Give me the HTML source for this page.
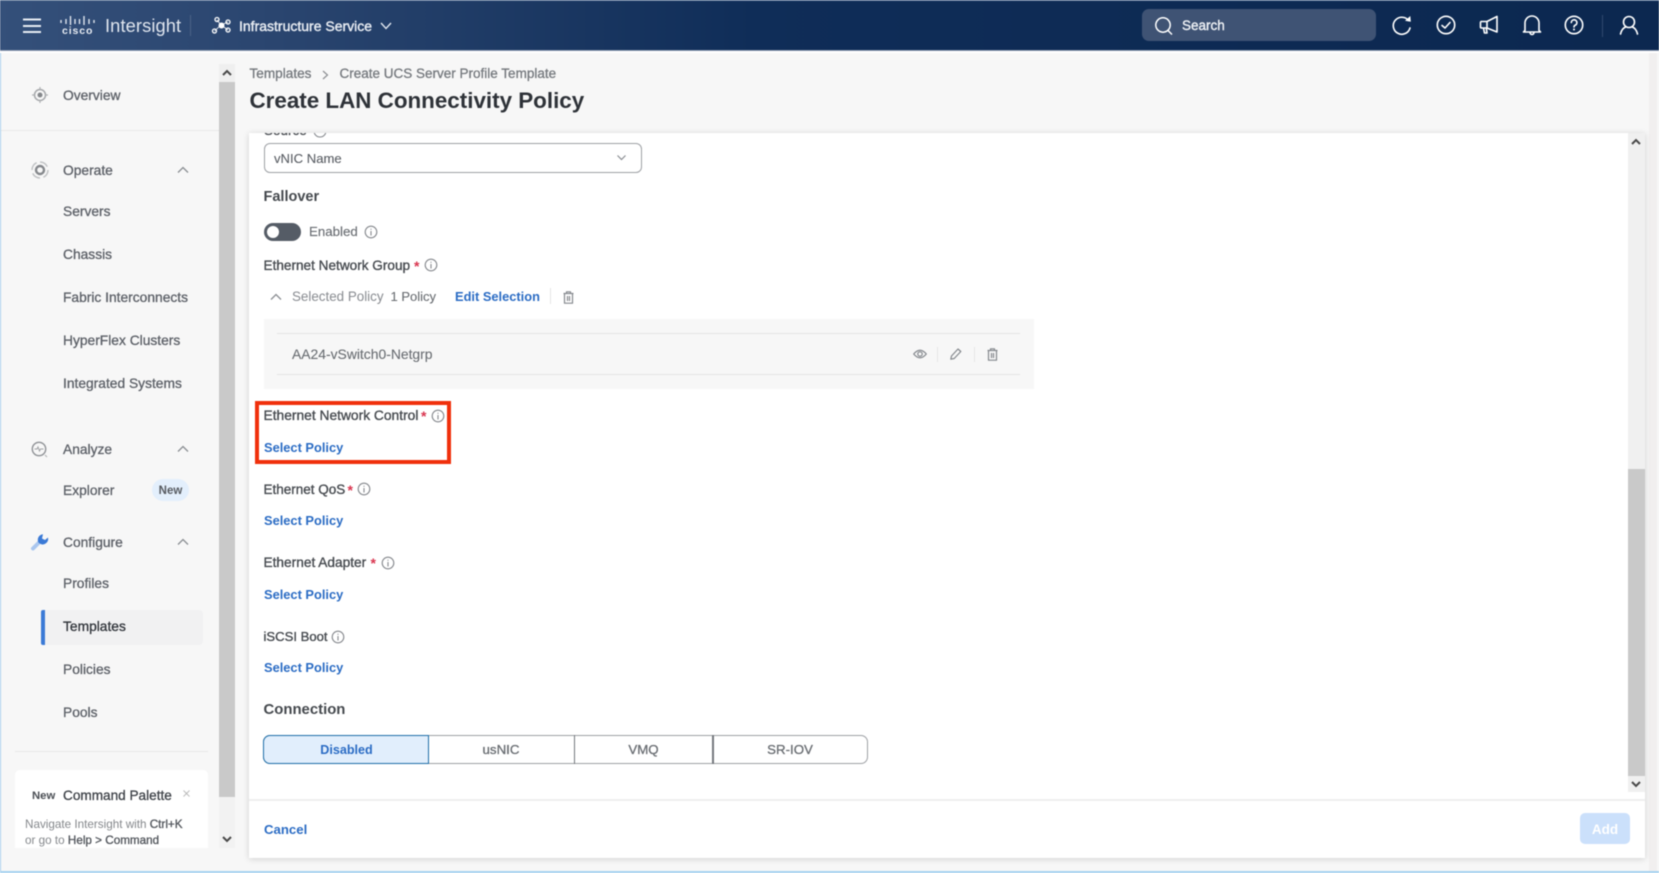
<!DOCTYPE html>
<html lang="en"><head><meta charset="utf-8"><title>Create LAN Connectivity Policy</title>
<style>
html,body{margin:0;padding:0;width:1659px;height:873px;overflow:hidden;background:#f7f7f7}
#r{position:absolute;left:0;top:0;width:1659px;height:873px;overflow:hidden;background:#f7f7f7;font-family:"Liberation Sans",sans-serif;filter:blur(.45px)}
.a{position:absolute}
.t{position:absolute;white-space:nowrap;line-height:20px;transform:translateY(-50%);margin-top:1px;font-size:13.8px;color:#5d6168;-webkit-text-stroke:.3px currentColor}
.c{transform:translate(-50%,-50%);margin-top:0}
.h{margin-top:0}
.l{color:#474b50;font-size:13.6px;-webkit-text-stroke:.35px currentColor}
.sp{color:#2b6cc4;font-size:12.85px;font-weight:bold;-webkit-text-stroke:0}
.st{color:#d9344e;font-size:14px;font-weight:bold;-webkit-text-stroke:0}
svg{position:absolute;overflow:visible}
.i{fill:none;stroke:#85888d;stroke-width:1.1}
.w{fill:none;stroke:#fff;stroke-width:1.6;stroke-linecap:round;stroke-linejoin:round}
.g{fill:none;stroke:#85898e;stroke-width:1.2;stroke-linejoin:round}
.ch{fill:none;stroke:#8a8d92;stroke-width:1.3}
.ar{fill:none;stroke:#4a4a4a;stroke-width:2}
b{font-weight:normal;-webkit-text-stroke:.35px currentColor}
</style></head><body><div id="r">

<!-- header -->
<div class="a" style="left:0;top:0;width:1659px;height:50px;background:linear-gradient(90deg,#34507a 0,#2b4670 260px,#0f2d58 760px,#0c2850 100%)"></div>
<div class="a" style="left:0;top:0;width:1659px;height:1px;background:#5b7497"></div>
<div class="a" style="left:0;top:50px;width:1659px;height:1px;background:#8f9db2"></div>
<svg style="left:23px;top:18px" width="18" height="16"><path d="M0 1.5H18M0 8H18M0 14H18" stroke="#e8edf3" stroke-width="1.9"/></svg>
<svg style="left:60px;top:16px" width="36" height="10"><path d="M1 4v3M6 3v5M10.500 0v9M15 3v5M19.500 3v5M24 0v9M29 3v5M34 4v3" stroke="#dfe5ee" stroke-width="1.4" fill="none"/></svg>
<div class="t h" style="left:62px;top:31px;font-size:10.500px;font-weight:bold;color:#e6ebf2;letter-spacing:.9px;-webkit-text-stroke:0;line-height:10px">cisco</div>
<div class="t h" style="left:105px;top:26px;font-size:18.300px;color:#dfe5ee;-webkit-text-stroke:0;letter-spacing:.1px">Intersight</div>
<div class="a" style="left:190px;top:15px;width:1px;height:21px;background:#4a6286"></div>
<svg style="left:212px;top:17px" width="19" height="17"><g fill="none" stroke="#fff" stroke-width="1.300"><circle cx="5" cy="2.500" r="2"/><circle cx="16" cy="5" r="2"/><circle cx="2.500" cy="14" r="2"/><circle cx="16" cy="13" r="2"/></g><path d="M5 3L9 8 2.500 14M16 5L9 8l7 5" stroke="#fff" stroke-width=".8" fill="none"/><circle cx="9.500" cy="8.500" r="3" fill="#fff"/></svg>
<div class="t h" style="left:239px;top:26px;color:#e9edf3;font-size:14px;-webkit-text-stroke:.4px currentColor">Infrastructure Service</div>
<svg style="left:380px;top:22px" width="12" height="8"><path d="M1 1l5 5.500L11 1" fill="none" stroke="#dfe5ee" stroke-width="1.400"/></svg>
<div class="a" style="left:1142px;top:9px;width:234px;height:32px;border-radius:7px;background:#3f5374"></div>
<svg style="left:1155px;top:17px" width="19" height="19"><circle cx="8" cy="8" r="7.200" fill="none" stroke="#fff" stroke-width="1.500"/><path d="M13 13.500l4 4" stroke="#fff" stroke-width="1.500" fill="none"/></svg>
<div class="t h" style="left:1182px;top:26px;color:#eef1f5;font-size:13.500px;-webkit-text-stroke:.4px currentColor">Search</div>
<svg style="left:1392px;top:15px" width="20" height="20"><path class="w" d="M16.500 5.500A8.500 8.500 0 1 0 18 13"/><path d="M13 5.800L18.800 6.800 18.300 1z" fill="#fff"/></svg>
<svg style="left:1436px;top:15px" width="20" height="20"><circle class="w" cx="10" cy="10" r="8.700" stroke-width="1.500"/><path class="w" d="M6 10.500l3 2.500 5-5.500"/></svg>
<svg style="left:1479px;top:15px" width="20" height="20"><path class="w" d="M2 6.500h6L18 1.500V17L8 13H2.500A1 1 0 0 1 1.500 12V7.500A1 1 0 0 1 2.500 6.500zM8 6.500V13M4.500 13l1 5h2.500l-.7-5"/></svg>
<svg style="left:1522px;top:15px" width="20" height="21"><path class="w" d="M3 15.500V8a7 7 0 0 1 14 0v7.500l1.500 1.500H1.500zM8 17.500a2 2 0 0 0 4 0"/></svg>
<svg style="left:1564px;top:15px" width="20" height="20"><circle class="w" cx="10" cy="10" r="8.700" stroke-width="1.500"/><path class="w" d="M7.300 7.500A2.800 2.800 0 1 1 11 10.300Q10 10.800 10 12"/><circle cx="10" cy="14.500" r="1" fill="#fff"/></svg>
<div class="a" style="left:1602px;top:15px;width:1px;height:22px;background:#30496e"></div>
<svg style="left:1619px;top:15px" width="20" height="20"><circle class="w" cx="10" cy="7" r="5.500" stroke-width="1.600"/><path class="w" d="M1.500 19Q3 13 7 11.800M18.500 19Q17 13 13 11.800"/></svg>

<!-- edges -->
<div class="a" style="left:0;top:51px;width:1px;height:822px;background:#a9d1ee"></div>
<div class="a" style="left:0;top:871px;width:1659px;height:2px;background:#a6d2f0"></div>
<div class="a" style="left:1649px;top:52px;width:8px;height:819px;background:#f1efef"></div>
<div class="a" style="left:0;top:51px;width:1659px;height:2px;background:#fff"></div>

<!-- sidebar -->
<div class="a" style="left:1px;top:130px;width:218px;height:1px;background:#e9e9e9"></div>
<svg style="left:32px;top:87px" width="16" height="16"><circle cx="8" cy="8" r="5.500" fill="none" stroke="#a6a8ab" stroke-width="1.500"/><circle cx="8" cy="8" r="2.500" fill="#85888c"/><path d="M8 0v2.500M8 13.500V16M0 8h2.500M13.500 8H16" stroke="#b0b2b5" stroke-width="1.200"/></svg>
<div class="t" style="left:63px;top:95px">Overview</div>
<svg style="left:31px;top:161px" width="18" height="18"><circle cx="9" cy="9" r="8" fill="none" stroke="#c0c2c4" stroke-width="1.500" stroke-dasharray="9 3.500"/><circle cx="9" cy="9" r="4" fill="none" stroke="#85888c" stroke-width="2.400"/></svg>
<div class="t" style="left:63px;top:170px">Operate</div>
<svg class="ch" style="left:177px;top:166px" width="12" height="8"><path d="M1 6.500L6 1.500 11 6.500"/></svg>
<div class="t" style="left:63px;top:211px">Servers</div>
<div class="t" style="left:63px;top:254px">Chassis</div>
<div class="t" style="left:63px;top:297px">Fabric Interconnects</div>
<div class="t" style="left:63px;top:340px">HyperFlex Clusters</div>
<div class="t" style="left:63px;top:383px">Integrated Systems</div>
<svg style="left:31px;top:441px" width="18" height="18"><circle cx="8" cy="8" r="6.700" fill="none" stroke="#8f9296" stroke-width="1.400"/><path d="M3.500 8h2.500l1-2 1.500 4 1-2h3" fill="none" stroke="#a0a2a5"/><path d="M14 14l2 2" stroke="#b5b7b9" stroke-width="1.200"/></svg>
<div class="t" style="left:63px;top:449px">Analyze</div>
<svg class="ch" style="left:177px;top:445px" width="12" height="8"><path d="M1 6.500L6 1.500 11 6.500"/></svg>
<div class="t" style="left:63px;top:490px">Explorer</div>
<div class="a" style="left:152px;top:479px;width:37px;height:22px;border-radius:11px;background:#e3effc"></div>
<div class="t c" style="left:170.500px;top:490.500px;font-size:11.500px;color:#565a60;font-weight:bold;-webkit-text-stroke:0">New</div>
<svg style="left:32px;top:534px" width="17" height="17"><path d="M1 14.500L8 7.500" stroke="#aac7ef" stroke-width="4" stroke-linecap="round"/><path d="M16 3.500A5.500 5.500 0 0 1 6.500 8.500 5.500 5.500 0 0 1 11 .3L10 4.500 13 6z" fill="#3b7ad6"/></svg>
<div class="t" style="left:63px;top:542px">Configure</div>
<svg class="ch" style="left:177px;top:538px" width="12" height="8"><path d="M1 6.500L6 1.500 11 6.500"/></svg>
<div class="t" style="left:63px;top:583px">Profiles</div>
<div class="a" style="left:41px;top:610px;width:162px;height:35px;border-radius:4px;background:#f1f1f2"></div>
<div class="a" style="left:41px;top:610px;width:4px;height:35px;border-radius:2px 0 0 2px;background:#3b7ad6"></div>
<div class="t" style="left:63px;top:626px;color:#30343a">Templates</div>
<div class="t" style="left:63px;top:669px">Policies</div>
<div class="t" style="left:63px;top:712px">Pools</div>
<div class="a" style="left:15px;top:751px;width:193px;height:1px;background:#e8e8e8"></div>
<div class="a" style="left:15px;top:770px;width:193px;height:78px;background:#fff;border-radius:5px 5px 0 0"></div>
<div class="t" style="left:32px;top:795px;font-size:11.300px;color:#4a4e54;font-weight:bold;-webkit-text-stroke:0">New</div>
<div class="t" style="left:63px;top:795px;color:#3e4248;font-size:13.600px">Command Palette</div>
<svg style="left:183px;top:790px" width="7" height="7"><path d="M.5.500l6 6M6.500.500l-6 6" stroke="#bbb" stroke-width="1"/></svg>
<div class="t" style="left:25px;top:824px;font-size:11.700px;color:#85888c;-webkit-text-stroke:0">Navigate Intersight with <b style="color:#55595f">Ctrl+K</b></div>
<div class="t" style="left:25px;top:840px;font-size:11.700px;color:#85888c;-webkit-text-stroke:0">or go to <b style="color:#55595f">Help &gt; Command</b></div>
<!-- left scrollbar -->
<div class="a" style="left:219px;top:64px;width:16px;height:18px;background:#efefef"></div>
<div class="a" style="left:219px;top:82px;width:16px;height:715px;background:#c9c9c9"></div>
<div class="a" style="left:219px;top:797px;width:16px;height:51px;background:#f2f2f2"></div>
<svg class="ar" style="left:222px;top:69px" width="10" height="7"><path d="M1 6L5 2l4 4"/></svg>
<svg class="ar" style="left:222px;top:836px" width="10" height="7"><path d="M1 1l4 4 4-4"/></svg>

<!-- main head -->
<div class="t" style="left:249.500px;top:73px;color:#75797e;font-size:13.600px">Templates</div>
<svg style="left:322px;top:70px" width="7" height="10"><path d="M1 1l4.500 4L1 9" fill="none" stroke="#8d8f93" stroke-width="1.200"/></svg>
<div class="t" style="left:339.500px;top:73px;color:#75797e;font-size:13.500px">Create UCS Server Profile Template</div>
<div class="t" style="left:249.500px;top:100px;font-size:22.400px;font-weight:bold;color:#2e3238;-webkit-text-stroke:0;line-height:28px">Create LAN Connectivity Policy</div>

<!-- card -->
<div class="a" style="left:249px;top:133px;width:1396px;height:725px;background:#fff;box-shadow:0 1px 6px rgba(0,0,0,.16)"></div>
<div class="a" style="left:249px;top:133px;width:600px;height:10px;overflow:hidden">
<div class="t" style="left:15px;top:-3px;font-size:13.500px;color:#474b50">Source</div>
<svg style="left:64px;top:-9px" width="14" height="14"><circle class="i" cx="7" cy="7" r="6"/></svg>
</div>
<!-- right scrollbar -->
<div class="a" style="left:1628px;top:133px;width:17px;height:336px;background:#f0f0f0"></div>
<div class="a" style="left:1628px;top:469px;width:17px;height:307px;background:#c9c9c9"></div>
<div class="a" style="left:1628px;top:776px;width:17px;height:16px;background:#f0f0f0"></div>
<svg class="ar" style="left:1631px;top:138px" width="10" height="7"><path d="M1 6L5 2l4 4"/></svg>
<svg class="ar" style="left:1631px;top:781px" width="10" height="7"><path d="M1 1l4 4 4-4"/></svg>

<div class="a" style="left:263.500px;top:142.500px;width:376px;height:28px;border:1.500px solid #9ea1a5;border-radius:6px"></div>
<div class="t" style="left:274px;top:157.500px;color:#5a5e64;font-size:13.100px;-webkit-text-stroke:.1px">vNIC Name</div>
<svg style="left:617px;top:155px" width="9" height="6"><path d="M.5.500l4 4 4-4" fill="none" stroke="#8a8d92" stroke-width="1.200"/></svg>
<div class="t" style="left:263.500px;top:195.500px;font-size:14.500px;font-weight:bold;color:#45494e;-webkit-text-stroke:0">Fallover</div>
<div class="a" style="left:264px;top:223px;width:37px;height:18px;border-radius:9px;background:#555c66"></div>
<div class="a" style="left:267px;top:226px;width:12px;height:12px;border-radius:6px;background:#fff"></div>
<div class="t" style="left:309px;top:230.500px;color:#6b6f74;font-size:13.300px;-webkit-text-stroke:.15px">Enabled</div>
<svg style="left:364px;top:225px" width="14" height="14"><circle class="i" cx="7" cy="7" r="5.800"/><path class="i" d="M7 6v4.500M7 3.700v1.100"/></svg>

<div class="t l" style="left:263.500px;top:264.500px">Ethernet Network Group</div>
<div class="t st" style="left:414px;top:264.500px">*</div>
<svg style="left:424px;top:258px" width="14" height="14"><circle class="i" cx="7" cy="7" r="5.800"/><path class="i" d="M7 6v4.500M7 3.700v1.100"/></svg>
<svg class="ch" style="left:270px;top:293px" width="12" height="8"><path d="M1 6.500L6 1.500 11 6.500"/></svg>
<div class="t" style="left:292px;top:295.500px;color:#8c8f94;font-size:13.400px;-webkit-text-stroke:.05px">Selected Policy</div>
<div class="t" style="left:390.500px;top:295.500px;color:#696d72;font-size:13px;-webkit-text-stroke:.1px">1 Policy</div>
<div class="t sp" style="left:455px;top:295.500px">Edit Selection</div>
<div class="a" style="left:550px;top:288px;width:1px;height:16px;background:#e6e6e6"></div>
<svg style="left:563px;top:290.500px" width="11" height="13"><path class="g" d="M.5 2.500h10M3.500 2.500V.8h4v1.700M1.500 2.500v9.700h8V2.500M4.500 5v5M6.500 5v5" stroke-width="1"/></svg>

<div class="a" style="left:264px;top:319px;width:770px;height:70px;background:#f7f7f7"></div>
<div class="a" style="left:277px;top:333px;width:743px;height:1px;background:#e4e4e4"></div>
<div class="a" style="left:277px;top:374px;width:743px;height:1px;background:#e4e4e4"></div>
<div class="t" style="left:292px;top:353px;color:#696d72;font-size:13.900px;-webkit-text-stroke:.1px">AA24-vSwitch0-Netgrp</div>
<svg style="left:913px;top:349px" width="14" height="10"><path class="g" d="M.7 5Q7-2.500 13.300 5 7 12.500.7 5z" stroke-width="1"/><circle class="g" cx="7" cy="5" r="2.200" stroke-width="1"/></svg>
<div class="a" style="left:937px;top:347px;width:1px;height:15px;background:#e6e6e6"></div>
<svg style="left:950px;top:348px" width="12" height="12"><path class="g" d="M.8 11.200L1.500 8 8 1l2.800 2.500-6.600 7z" stroke-width="1"/></svg>
<div class="a" style="left:974px;top:347px;width:1px;height:15px;background:#e6e6e6"></div>
<svg style="left:987px;top:347.500px" width="11" height="13"><path class="g" d="M.5 2.500h10M3.500 2.500V.8h4v1.700M1.500 2.500v9.700h8V2.500M4.500 5v5M6.500 5v5" stroke-width="1"/></svg>

<div class="a" style="left:255px;top:401px;width:188px;height:55px;border:4px solid #f0300c"></div>
<div class="t l" style="left:263.500px;top:414.500px;font-size:13.800px">Ethernet Network Control</div>
<div class="t st" style="left:421px;top:414.500px">*</div>
<svg style="left:431px;top:409px" width="14" height="14"><circle class="i" cx="7" cy="7" r="5.800"/><path class="i" d="M7 6v4.500M7 3.700v1.100"/></svg>
<div class="t sp" style="left:264px;top:447px">Select Policy</div>

<div class="t l" style="left:263.500px;top:488.500px;font-size:13.500px">Ethernet QoS</div>
<div class="t st" style="left:347.500px;top:488.500px">*</div>
<svg style="left:357px;top:482px" width="14" height="14"><circle class="i" cx="7" cy="7" r="5.800"/><path class="i" d="M7 6v4.500M7 3.700v1.100"/></svg>
<div class="t sp" style="left:264px;top:520px">Select Policy</div>

<div class="t l" style="left:263.500px;top:561.500px;font-size:13.700px">Ethernet Adapter</div>
<div class="t st" style="left:370.500px;top:561.500px">*</div>
<svg style="left:381px;top:556px" width="14" height="14"><circle class="i" cx="7" cy="7" r="5.800"/><path class="i" d="M7 6v4.500M7 3.700v1.100"/></svg>
<div class="t sp" style="left:264px;top:594px">Select Policy</div>

<div class="t l" style="left:263.500px;top:636px;font-size:13.100px">iSCSI Boot</div>
<svg style="left:331px;top:630px" width="14" height="14"><circle class="i" cx="7" cy="7" r="5.800"/><path class="i" d="M7 6v4.500M7 3.700v1.100"/></svg>
<div class="t sp" style="left:264px;top:667px">Select Policy</div>

<div class="t" style="left:263.500px;top:709px;font-size:14.900px;font-weight:bold;color:#45494e;-webkit-text-stroke:0">Connection</div>

<div class="a" style="left:263px;top:735px;width:603px;height:27px;border:1.200px solid #9ea1a5;border-radius:7px"></div>
<div class="a" style="left:263px;top:735px;width:164px;height:27px;background:#e1eefc;border:1.500px solid #1e6ea8;border-radius:7px 0 0 7px"></div>
<div class="a" style="left:573.500px;top:735px;width:1.500px;height:29px;background:#75797e"></div>
<div class="a" style="left:712px;top:735px;width:1.500px;height:29px;background:#75797e"></div>
<div class="t c sp" style="left:346.500px;top:750px;font-size:12.600px">Disabled</div>
<div class="t c" style="left:501px;top:750px;font-size:13.300px;color:#696d72">usNIC</div>
<div class="t c" style="left:643.500px;top:750px;font-size:13.300px;color:#696d72">VMQ</div>
<div class="t c" style="left:790px;top:750px;font-size:13.300px;color:#696d72">SR-IOV</div>

<div class="a" style="left:249px;top:799px;width:1396px;height:2px;background:#efefef"></div>
<div class="t sp" style="left:264px;top:828.500px;font-size:13.200px">Cancel</div>
<div class="a" style="left:1580px;top:813px;width:50px;height:31px;background:#cbe0fb;border-radius:5px"></div>
<div class="t c" style="left:1605px;top:829.500px;font-size:13.500px;font-weight:bold;color:#fff;-webkit-text-stroke:0">Add</div>

</div></body></html>
